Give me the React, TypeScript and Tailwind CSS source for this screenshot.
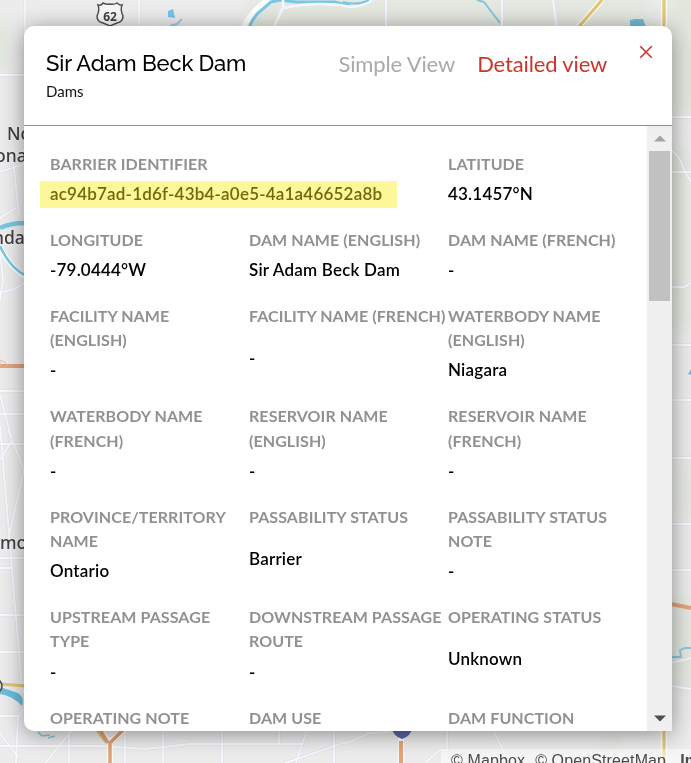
type Field = { label: string[]; value: string; wide?: boolean };

const fields: Field[] = [
  { label: ['BARRIER IDENTIFIER'], value: 'ac94b7ad-1d6f-43b4-a0e5-4a1a46652a8b', wide: true },
  { label: ['LATITUDE'], value: '43.1457°N' },
  { label: ['LONGITUDE'], value: '-79.0444°W' },
  { label: ['DAM NAME (ENGLISH)'], value: 'Sir Adam Beck Dam' },
  { label: ['DAM NAME (FRENCH)'], value: '-' },
  { label: ['FACILITY NAME', '(ENGLISH)'], value: '-' },
  { label: ['FACILITY NAME (FRENCH)'], value: '-' },
  { label: ['WATERBODY NAME', '(ENGLISH)'], value: 'Niagara' },
  { label: ['WATERBODY NAME', '(FRENCH)'], value: '-' },
  { label: ['RESERVOIR NAME', '(ENGLISH)'], value: '-' },
  { label: ['RESERVOIR NAME', '(FRENCH)'], value: '-' },
  { label: ['PROVINCE/TERRITORY', 'NAME'], value: 'Ontario' },
  { label: ['PASSABILITY STATUS'], value: 'Barrier' },
  { label: ['PASSABILITY STATUS', 'NOTE'], value: '-' },
  { label: ['UPSTREAM PASSAGE', 'TYPE'], value: '-' },
  { label: ['DOWNSTREAM PASSAGE', 'ROUTE'], value: '-' },
  { label: ['OPERATING STATUS'], value: 'Unknown' },
  { label: ['OPERATING NOTE'], value: '-' },
  { label: ['DAM USE'], value: '-' },
  { label: ['DAM FUNCTION'], value: '-' },
];

function MapBackground() {
  return (
    <svg className="absolute inset-0" width="691" height="763" viewBox="0 0 691 763" fill="none">
      <defs>
        <filter id="soft"><feGaussianBlur stdDeviation="7" /></filter>
      </defs>
      <rect width="691" height="763" fill="#ececec" />
      <g fill="#dfe6da" filter="url(#soft)">
        <rect x="-10" y="20" width="18" height="50" />
        <rect x="250" y="-5" width="400" height="45" opacity=".7" />
        <rect x="668" y="-10" width="40" height="125" opacity=".8" />
        <rect x="665" y="150" width="20" height="180" />
        <rect x="684" y="460" width="14" height="60" />
        <rect x="665" y="600" width="40" height="90" opacity=".7" />
        <circle cx="611" cy="741" r="7" />
      </g>
      {/* local streets */}
      <g stroke="#dfdfea" strokeWidth="3">
        <path id="streets" d="M25 0V75H0M139 0V30M386 0V30M502 0V30M553 0L557 30M0 160L30 147M0 172L30 162M12 150L19 215M0 218L16 208M0 292Q20 290 26 280M0 250L3 280L0 300M0 391H26M0 414H26M0 395L12 440L0 460M0 444H26M0 425L22 690L30 700M8 430L24 470L8 540M0 558H26M0 568H12M0 615H26M0 652H26M0 716H20M16 763L18 716L26 706M0 733L18 757M0 746H100L145 749L190 744H302M45 763L73 729M69 730V763M125 730V763M163 730V763M222 730V763M279 730V743M307 730L296 763M285 763L346 742M334 730V763M345 744L370 733L390 732M425 763L440 750H447V730M493 730L505 754M671 117H691M671 116V117M671 150Q680 156 684 170L691 182M671 172H691M671 287H684L691 283M671 345H691M671 400H691M671 458H691M671 524H691M671 570H691M671 663L691 658M671 686L691 689" />
      </g>
      <use href="#streets" stroke="#f8f8fd" strokeWidth="1.8" />
      {/* waterways */}
      <path d="M244 30Q250 14 266 3L272 -1" stroke="#fff" strokeWidth="8" />
      <path d="M247 34Q250 22 258 13L271 2L280 0L296 2H335L350 6" stroke="#78c7e5" strokeWidth="3" />
      <path d="M283 -2V7L274 27M284 8Q310 2 340 5Q359 10 372 0" stroke="#f8f8fc" strokeWidth="2.5" />
      <path d="M343 2Q357 6 369 0" stroke="#78c7e5" strokeWidth="2" />
      <path d="M168 11L173 9L175 18L168 17Z" fill="#71c5e9" />
      <path d="M170 26L177 24L182 19" stroke="#91cfe8" strokeWidth="2" />
      <path d="M477 0L484 2L500 23" stroke="#81c6dd" strokeWidth="2" />
      <path d="M630 20L635 19L643 19L646 27H630Z" fill="#72bfd5" />
      <path d="M0 228Q10 223 25 223" stroke="#79c7e3" strokeWidth="4.5" />
      <path d="M-2 243Q10 268 25 276" stroke="#fff" strokeWidth="5" />
      <path d="M0 246Q10 268 25 275" stroke="#79c7e3" strokeWidth="2.5" />
      <path d="M0 687L18 693Q25 698 22 706Q13 696 0 694Z" fill="#69bddd" />
      <path d="M38 732L42 736L50 735M48 738L55 736" stroke="#83c6dc" strokeWidth="1.5" />
      <path d="M671 657H681L680 650L685 648L691 648" stroke="#8cc8de" strokeWidth="1.8" />
      <path d="M688 374L691 369V375Z" fill="#78b9e3" />
      {/* highways */}
      <g stroke="#fff" strokeWidth="5.5"><path d="M602 0L576 30M664 0V30M110 763V743L97 728M110 742L125 729M401 738V763M664 729V763" /></g>
      <path d="M602 0L576 30M664 0V30M664 729V763M0 684L26 686M97 730L106 742" stroke="#e1c674" strokeWidth="3.2" />
      <path d="M0 366H26M671 604L691 608M401 741V763" stroke="#e3a37b" strokeWidth="4" />
      <path d="M110 763V743L123 730M108 743L100 730" stroke="#dfa276" strokeWidth="3.5" />
      <path d="M0 360Q6 361 8 366M0 360V366" stroke="#e9bea2" strokeWidth="1" />
      {/* route shields */}
      <path d="M98 5Q101 6 103 3Q107 5 110 4Q114 5 117 3Q120 6 122 5Q120 10 123 16Q123 22 117 23L110 26L103 23Q97 22 97 16Q100 10 98 5Z" fill="#f7f7f7" stroke="#505050" strokeWidth="1.5" />
      <text x="110" y="20.5" textAnchor="middle" fill="#404040" className="font-['Open_Sans',sans-serif] text-[12px] font-bold">62</text>
      <path d="M392 728H412Q411 736 402 739Q393 736 392 728Z" fill="#5b65a5" />
      <circle cx="-5" cy="686" r="7" fill="#ddd" stroke="#444" strokeWidth="1.5" />
      {/* place names */}
      <g fill="#404040" stroke="#f2f2f2" strokeWidth="1.5" paintOrder="stroke" className="font-['Noto_Sans','Open_Sans',sans-serif] text-[17.5px] font-medium">
        <text x="7" y="139.5">No</text>
        <text x="-5" y="162">ona</text>
        <text x="-7" y="244">nda</text>
        <text x="0" y="549">mo</text>
      </g>
    </svg>
  );
}

function FieldCell({ label, value, wide }: Field) {
  return (
    <div className={wide ? 'col-span-2 grid pb-[22px]' : 'grid pb-[22px]'}>
      <div className="text-[16px] leading-[24.2px] font-bold tracking-[0.08px] whitespace-nowrap text-[#919191]">
        {label.map((line) => (
          <div key={line}>{line}</div>
        ))}
      </div>
      <div
        className={
          wide
            ? 'mt-[5px] -mb-[2px] -ml-[10px] h-[27px] w-[357px] bg-[#fcf899] pl-[10px] text-[17px] leading-[26px] font-semibold tracking-[0.2px] text-[#706b08]'
            : 'pt-[6px] text-[17px] leading-6 font-semibold tracking-[0.2px] text-black'
        }
      >
        {value}
      </div>
    </div>
  );
}

export default function App() {
  return (
    <div className="relative h-[763px] w-[691px] overflow-hidden font-[Lato,sans-serif]">
      <MapBackground />
      <div className="absolute top-[749px] left-[441px] flex h-6 w-[250px] bg-white/50 pl-[10px] font-['Liberation_Sans',Arial,sans-serif] text-[16px] leading-[24px] tracking-[0.12px] whitespace-nowrap text-[#4b4b4b]">
        <span>© Mapbox</span>
        <span className="ml-[10px]">© OpenStreetMap</span>
        <span className="ml-[14px] font-bold">Improve this map</span>
      </div>
      <section className="absolute top-[26px] left-[24px] flex h-[705px] w-[648px] flex-col overflow-hidden rounded-[10px] rounded-br-none bg-white shadow-[0_3px_22px_0_rgba(0,0,0,0.42)]">
        <header className="flex h-[100px] shrink-0 border-b border-[#8e8e8e] pl-[22px]">
          <div className="w-[292.5px] pt-[22px]">
            <h1 className="font-[Raleway,Lato,sans-serif] text-[22px] leading-[30px] font-medium tracking-[-0.15px] whitespace-nowrap text-black">Sir Adam Beck Dam</h1>
            <p className="mt-[3px] text-[15px] leading-5 text-[#111]">Dams</p>
          </div>
          <nav className="flex flex-1 gap-[22px] pt-[23px] text-[22px] leading-[30px] tracking-[-0.14px] whitespace-nowrap">
            <span className="text-[#aaaaaa]">Simple View</span>
            <span className="text-[#c9372c]">Detailed view</span>
          </nav>
          <svg className="mt-[19px] mr-[19px]" width="14" height="14" viewBox="0 0 14 14" stroke="#c9372c" strokeWidth="1.6">
            <path d="M1.2 1.2L12.8 12.8M12.8 1.2L1.2 12.8" />
          </svg>
        </header>
        <div className="flex min-h-0 flex-1">
          <div className="grid w-[623px] grid-cols-[199px_199px_199px] content-start overflow-hidden pt-[25.5px] pl-[26px]">
            {fields.map((f) => (
              <FieldCell key={f.label.join(' ')} {...f} />
            ))}
          </div>
          <div className="flex w-[25px] flex-col items-center bg-[#f0f0f0]">
            <svg className="my-[9px] shrink-0" width="12" height="7" viewBox="0 0 12 7"><path d="M6 0.5L12 6.5H0Z" fill="#a3a3a3" /></svg>
            <div className="h-[150px] w-[21px] bg-[#c1c1c1]" />
            <svg className="mt-auto mb-[9px] shrink-0" width="12" height="7" viewBox="0 0 12 7"><path d="M0 0.5H12L6 6.5Z" fill="#505050" /></svg>
          </div>
        </div>
      </section>
    </div>
  );
}
